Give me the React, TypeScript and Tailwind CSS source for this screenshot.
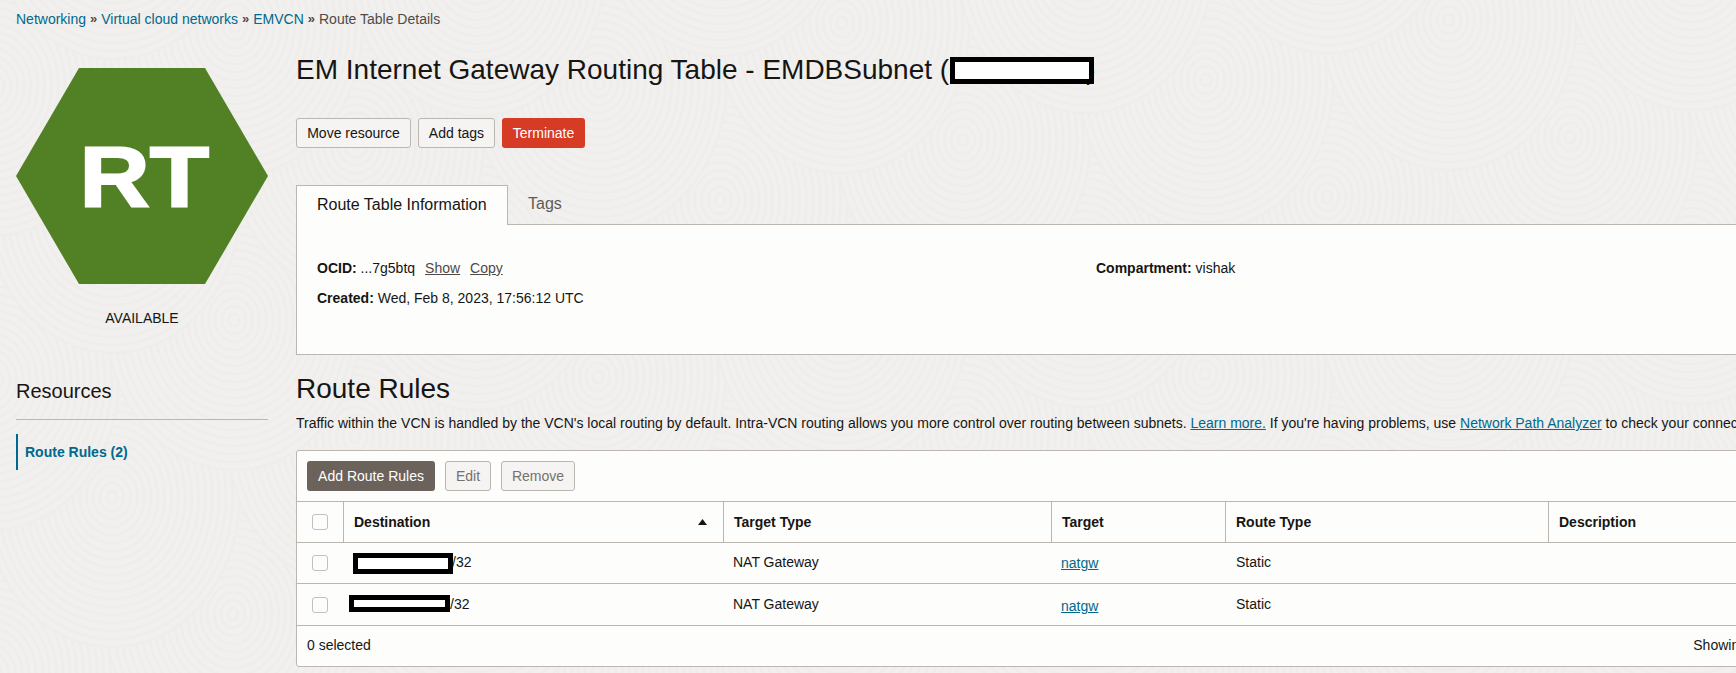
const font = "font-['Liberation_Sans',Arial,sans-serif]";

// faint fingerprint texture behind the page
function Texture() {
    const swirls: { x: number; y: number }[] = [];
    for (let i = -8; i < 10; i++) {
        for (let j = -5; j < 6; j++) {
            const x = 1327 + i * 243 + j * 122;
            const y = 197 - i * 60 - j * 177;
            if (x > -150 && x < 1890 && y > -150 && y < 830) swirls.push({ x, y });
        }
    }
    swirls.sort((a, b) => b.y - a.y);
    const rings = [150, 142, 134, 126, 118, 110, 102, 94, 86, 78, 70, 62, 54, 46, 38, 30, 22, 14, 6];
    return (
        <svg className="absolute inset-0" width="1736" height="673">
            {swirls.map((s, i) => (
                <g key={i}>
                    {rings.map((r) => (
                        <ellipse
                            key={r}
                            cx={s.x}
                            cy={s.y}
                            rx={r * 0.85}
                            ry={r}
                            fill="#f1f0ee"
                            stroke="#eeedeb"
                            strokeWidth="2.5"
                        />
                    ))}
                </g>
            ))}
        </svg>
    );
}

function Redacted({ className }: { className: string }) {
    return <span className={`block shrink-0 bg-white border-black ${className}`} />;
}

function Checkbox() {
    return <span className="block w-4 h-4 bg-[#fdfdfb] border border-[#c4bfb9] rounded-[3px]" />;
}

const rows = [
    { pad: 'pl-[10px]', box: 'w-[100px] h-[21px] border-[5px]', slash: '-ml-px', link: 'pt-0', h: 'h-[41px]' },
    { pad: 'pl-[6px]', box: 'w-[101px] h-[17px] border-[5px] -mt-[2px]', slash: 'ml-0', link: 'pt-[3px]', h: 'h-[42px]' },
];

const cols = 'grid-cols-[46px_380px_328px_174px_323px_1fr]';

export default function App() {
    return (
        <div className={`relative w-[1736px] h-[673px] overflow-hidden bg-[#f1f0ee] text-[14px] leading-5 text-[#161513] ${font}`}>
            <Texture />
            <div className="relative">
                <nav className="h-[38px] pl-4 flex items-center gap-1 text-[#00688c]">
                    <a>Networking</a>
                    <span className="text-[#4f4a47] text-[13px] font-bold">»</span>
                    <a>Virtual cloud networks</a>
                    <span className="text-[#4f4a47] text-[13px] font-bold">»</span>
                    <a>EMVCN</a>
                    <span className="text-[#4f4a47] text-[13px] font-bold">»</span>
                    <span className="text-[#4f4a47]">Route Table Details</span>
                </nav>

                <div className="flex">
                    <aside className="ml-4 w-[252px] shrink-0">
                        <div className="mt-[30px] h-[216px] flex items-center justify-center bg-[#528024] [clip-path:polygon(25%_0,75%_0,100%_50%,75%_100%,25%_100%,0_50%)]">
                            <span className="ml-[5px] text-[86px] leading-none font-bold text-white scale-x-[1.13] [-webkit-text-stroke:2px_white]">RT</span>
                        </div>
                        <p className="mt-6 text-center">AVAILABLE</p>
                        <h3 className="mt-[51px] pb-4 text-[20px] leading-6 border-b border-[#bcb6b1]">Resources</h3>
                        <div className="mt-[14px] h-9 pl-[7px] flex items-center border-l-2 border-[#00688c] font-bold text-[#00688c]">
                            Route Rules (2)
                        </div>
                    </aside>

                    <main className="ml-[28px] w-[1511px] shrink-0">
                        <h1 className="mt-[14px] flex items-center h-9 text-[28px] leading-9">
                            <span>EM Internet Gateway Routing Table - EMDBSubnet (</span>
                            <Redacted className="relative z-10 ml-[1px] w-[144px] h-[27px] border-[5px]" />
                            <span className="-ml-[8px]">)</span>
                        </h1>

                        <div className="mt-[30px] flex gap-[7px]">
                            <button className="h-[30px] w-[115px] bg-[#f5f4f2] border border-[#bcb6b1] rounded-[3px]">Move resource</button>
                            <button className="h-[30px] w-[77px] bg-[#f5f4f2] border border-[#bcb6b1] rounded-[3px]">Add tags</button>
                            <button className="h-[30px] w-[83px] bg-[#d63b25] text-white rounded-[3px]">Terminate</button>
                        </div>

                        <div className="mt-[37px] flex h-[39px] text-[16px]">
                            <div className="relative z-10 w-[212px] h-[40px] pl-5 pt-[9px] bg-[#fdfdfb] border border-b-0 border-[#bcb6b1]">
                                Route Table Information
                            </div>
                            <div className="pl-5 pt-[9px] text-[#5f5a56]">Tags</div>
                        </div>
                        <section className="h-[131px] pt-[33px] pl-5 bg-[#fdfdfb] border border-[#bcb6b1]">
                            <div className="flex">
                                <p className="w-[779px]">
                                    <b>OCID:</b> ...7g5btq
                                    <a className="ml-[10px] underline text-[#4f4a47]">Show</a>
                                    <a className="ml-[10px] underline text-[#4f4a47]">Copy</a>
                                </p>
                                <p><b>Compartment:</b> vishak</p>
                            </div>
                            <p className="mt-[10px]"><b>Created:</b> Wed, Feb 8, 2023, 17:56:12 UTC</p>
                        </section>

                        <h2 className="mt-4 text-[28px] leading-9">Route Rules</h2>
                        <p className="mt-[6px] whitespace-nowrap">
                            Traffic within the VCN is handled by the VCN's local routing by default. Intra-VCN routing allows you more control over routing between subnets.{' '}
                            <a className="underline text-[#00688c]">Learn more.</a> If you're having problems, use{' '}
                            <a className="underline text-[#00688c]">Network Path Analyzer</a> to check your connectivity.
                        </p>

                        <div className="mt-[17px] h-[217px] bg-[#fdfdfb] border border-[#bcb6b1] rounded-[3px]">
                            <div className="h-[51px] pt-[10px] pl-[10px] flex gap-[10px] border-b border-[#bcb6b1]">
                                <button className="h-[30px] w-[128px] bg-[#6b625c] text-white rounded-[3px]">Add Route Rules</button>
                                <button className="h-[30px] w-[46px] bg-[#f5f4f2] border border-[#bcb6b1] text-[#77716c] rounded-[3px]">Edit</button>
                                <button className="h-[30px] w-[74px] bg-[#f5f4f2] border border-[#bcb6b1] text-[#77716c] rounded-[3px]">Remove</button>
                            </div>

                            <div className={`grid ${cols} h-[41px] border-b border-[#bcb6b1] font-bold`}>
                                <div className="pl-[15px] flex items-center"><Checkbox /></div>
                                <div className="pl-[10px] pr-[16px] flex items-center justify-between border-l border-[#bcb6b1]">
                                    Destination
                                    <svg width="9" height="6" viewBox="0 0 9 6"><polygon points="4.5,0 9,6 0,6" fill="#161513" /></svg>
                                </div>
                                <div className="pl-[10px] flex items-center border-l border-[#bcb6b1]">Target Type</div>
                                <div className="pl-[10px] flex items-center border-l border-[#bcb6b1]">Target</div>
                                <div className="pl-[10px] flex items-center border-l border-[#bcb6b1]">Route Type</div>
                                <div className="pl-[10px] flex items-center border-l border-[#bcb6b1]">Description</div>
                            </div>

                            {rows.map((r, i) => (
                                <div key={i} className={`grid ${cols} ${r.h} border-b border-[#bcb6b1]`}>
                                    <div className="pl-[15px] flex items-center"><Checkbox /></div>
                                    <div className={`${r.pad} flex items-center`}>
                                        <Redacted className={r.box} />
                                        <span className={`${r.slash} pb-[2px]`}>/32</span>
                                    </div>
                                    <div className="pl-[10px] pb-[2px] flex items-center">NAT Gateway</div>
                                    <div className="pl-[10px] flex items-center">
                                        <a className={`underline text-[#00688c] ${r.link}`}>natgw</a>
                                    </div>
                                    <div className="pl-[11px] pb-[2px] flex items-center">Static</div>
                                    <div />
                                </div>
                            ))}

                            <div className="h-[40px] pb-[2px] px-[10px] flex items-center justify-between">
                                <span>0 selected</span>
                                <span>Showing 2 items</span>
                            </div>
                        </div>
                    </main>
                </div>
            </div>
        </div>
    );
}
